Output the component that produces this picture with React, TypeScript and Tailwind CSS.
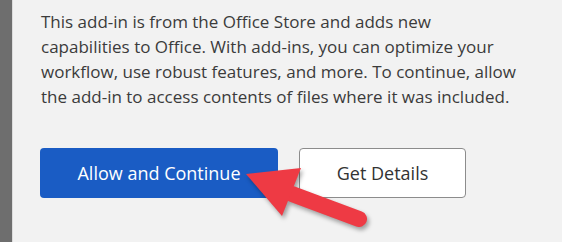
export default function App() {
  return (
    <div className="relative flex h-[242px] w-[562px] overflow-hidden bg-[#f2f2f2] font-['Open_Sans',sans-serif]">
      <div className="w-[12px] shrink-0 bg-[#6e6e6e]" />
      <div className="w-[1px] shrink-0 bg-[#dcdcdc]" />
      <div className="flex flex-col pl-[27px] pt-[9px]">
        <p className="ml-[1px] text-[17px] leading-[25px] text-[#3b3b3b]">
          This add-in is from the Office Store and adds new
          <br />
          capabilities to Office. With add-ins, you can optimize your
          <br />
          workflow, use robust features, and more. To continue, allow
          <br />
          the add-in to access contents of files where it was included.
        </p>
        <div className="mt-[39px] flex gap-[21px]">
          <button className="flex h-[50px] w-[238px] items-center justify-center rounded-[4px] bg-[#1a5cc4] text-[18px] text-white">
            Allow and Continue
          </button>
          <button className="flex h-[50px] w-[167px] items-center justify-center rounded-[4px] border border-[#8c8c8c] bg-white text-[18px] text-[#333333]">
            Get Details
          </button>
        </div>
      </div>

      {/* annotation arrow */}
      <svg
        className="pointer-events-none absolute left-0 top-0 drop-shadow-[2px_3px_2px_rgba(0,0,0,0.35)]"
        width="562"
        height="242"
        viewBox="0 0 562 242"
      >
        <line x1="292" y1="194" x2="359" y2="219" stroke="#ee3a44" strokeWidth="16" strokeLinecap="round" />
        <polygon points="246,174 301,168 282,216" fill="#ee3a44" strokeLinejoin="round" />
      </svg>
    </div>
  );
}
